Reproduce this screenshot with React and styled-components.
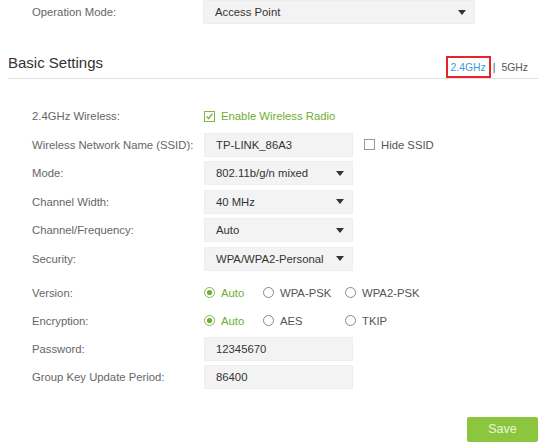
import React from "react";
import styled, { createGlobalStyle } from "styled-components";

const GlobalStyle = createGlobalStyle`
  html, body {
    margin: 0;
    padding: 0;
    background: #fff;
  }
  body {
    font-family: "Liberation Sans", Arial, sans-serif;
    font-size: 11.3px;
    color: #333;
  }
`;

const Page = styled.div`
  width: 554px;
  height: 446px;
  overflow: hidden;
  display: flex;
  flex-direction: column;
`;

const Group = styled.div`
  display: flex;
  flex-direction: column;
  gap: ${(p) => p.$gap || 4}px;
  margin-top: ${(p) => p.$top || 0}px;
`;

const Row = styled.div`
  display: grid;
  grid-template-columns: ${(p) => p.$labelWidth || 172}px auto;
  align-items: center;
  height: ${(p) => p.$height || 24}px;
  padding-left: 32px;
`;

const Label = styled.div`
  color: #666;
  white-space: nowrap;
`;

const Controls = styled.div`
  display: flex;
  align-items: center;
`;

const TextBox = styled.div`
  box-sizing: border-box;
  width: ${(p) => p.$width || 149}px;
  height: 24px;
  background: #f3f3f3;
  border: 1px solid #eeeeee;
  display: flex;
  align-items: center;
  justify-content: space-between;
  padding: 0 8px 0 11px;
  color: #333;
`;

const Arrow = styled.span`
  width: 0;
  height: 0;
  border-left: 4px solid transparent;
  border-right: 4px solid transparent;
  border-top: 5px solid #333;
`;

const Header = styled.div`
  display: flex;
  justify-content: space-between;
  align-items: center;
  height: 28px;
  margin: 27px 16px 0 8px;
  border-bottom: 1px solid #dedede;
`;

const Title = styled.div`
  font-size: 15px;
  color: #333;
  padding-bottom: 3px;
`;

const Tabs = styled.div`
  align-self: flex-end;
  display: flex;
  align-items: center;
  margin-right: 10px;
  font-size: 10.4px;
  color: #555;
`;

const Tab = styled.span`
  box-sizing: border-box;
  height: 22px;
  display: flex;
  align-items: center;
  padding: ${(p) => (p.$active ? "0 3px" : "0")};
  color: ${(p) => (p.$active ? "#3a9bd5" : "#555")};
  border: ${(p) => (p.$active ? "2px solid #e3262b" : "none")};
`;

const Divider = styled.span`
  margin: 0 6px 0 2px;
  color: #555;
`;

const Check = styled.label`
  display: flex;
  align-items: center;
  gap: 6px;
  margin-left: ${(p) => p.$left || 0}px;
  color: ${(p) => (p.$on ? "#6fae2e" : "#555")};
`;

const Option = styled.label`
  display: flex;
  align-items: center;
  gap: 6px;
  width: ${(p) => p.$width}px;
  color: ${(p) => (p.$on ? "#6fae2e" : "#555")};
`;

const Footer = styled.div`
  display: flex;
  justify-content: flex-end;
  margin: 28px 16px 0 0;
`;

const SaveButton = styled.button`
  width: 71px;
  height: 25px;
  border: none;
  border-radius: 2px;
  background: #8cc63f;
  color: #e9f5dc;
  font-family: "Liberation Sans", Arial, sans-serif;
  font-size: 12.5px;
  cursor: pointer;
`;

const CheckIcon = ({ on }) => (
  <svg width="11" height="11" viewBox="0 0 11 11">
    <rect x="0.5" y="0.5" width="10" height="10" fill="#fff" stroke={on ? "#7fb848" : "#999"} />
    {on && <path d="M2.5 5.3 L4.6 7.5 L8.6 2.6" fill="none" stroke="#6fae2e" strokeWidth="1.2" />}
  </svg>
);

const RadioIcon = ({ on }) => (
  <svg width="11" height="11" viewBox="0 0 11 11">
    <circle cx="5.5" cy="5.5" r="5" fill="#fff" stroke={on ? "#7fb848" : "#888"} />
    {on && <circle cx="5.5" cy="5.5" r="2.6" fill="#6fae2e" />}
  </svg>
);

const Select = ({ value, width }) => (
  <TextBox $width={width}>
    <span>{value}</span>
    <Arrow />
  </TextBox>
);

const RadioRow = ({ label, options, current }) => (
  <Row>
    <Label>{label}</Label>
    <Controls>
      {options.map(([text, w]) => (
        <Option key={text} $width={w} $on={text === current}>
          <RadioIcon on={text === current} />
          {text}
        </Option>
      ))}
    </Controls>
  </Row>
);

export default function App() {
  return (
    <Page>
      <GlobalStyle />
      <Row $height={23} $labelWidth={171}>
        <Label>Operation Mode:</Label>
        <Select value="Access Point" width={272} />
      </Row>

      <Header>
        <Title>Basic Settings</Title>
        <Tabs>
          <Tab $active>2.4GHz</Tab>
          <Divider>|</Divider>
          <Tab>5GHz</Tab>
        </Tabs>
      </Header>

      <Group $gap={4.5} $top={25}>
        <Row>
          <Label>2.4GHz Wireless:</Label>
          <Check $on>
            <CheckIcon on />
            Enable Wireless Radio
          </Check>
        </Row>
        <Row>
          <Label>Wireless Network Name (SSID):</Label>
          <Controls>
            <TextBox>TP-LINK_86A3</TextBox>
            <Check $left={11}>
              <CheckIcon />
              Hide SSID
            </Check>
          </Controls>
        </Row>
        <Row>
          <Label>Mode:</Label>
          <Select value="802.11b/g/n mixed" />
        </Row>
        <Row>
          <Label>Channel Width:</Label>
          <Select value="40 MHz" />
        </Row>
        <Row>
          <Label>Channel/Frequency:</Label>
          <Select value="Auto" />
        </Row>
        <Row>
          <Label>Security:</Label>
          <Select value="WPA/WPA2-Personal" />
        </Row>
      </Group>

      <Group $gap={4} $top={10}>
        <RadioRow
          label="Version:"
          current="Auto"
          options={[["Auto", 59], ["WPA-PSK", 82], ["WPA2-PSK", 90]]}
        />
        <RadioRow
          label="Encryption:"
          current="Auto"
          options={[["Auto", 59], ["AES", 82], ["TKIP", 60]]}
        />
        <Row>
          <Label>Password:</Label>
          <TextBox>12345670</TextBox>
        </Row>
        <Row>
          <Label>Group Key Update Period:</Label>
          <TextBox>86400</TextBox>
        </Row>
      </Group>

      <Footer>
        <SaveButton>Save</SaveButton>
      </Footer>
    </Page>
  );
}
